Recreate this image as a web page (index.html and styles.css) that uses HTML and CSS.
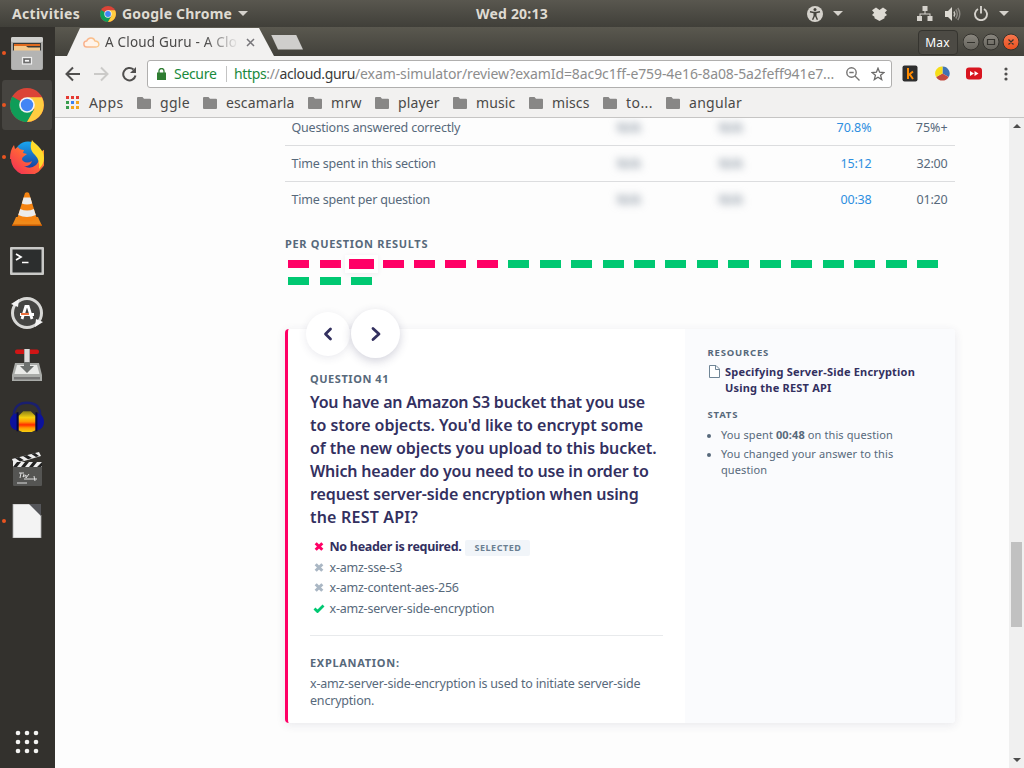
FILE: index.html
```html
<!DOCTYPE html>
<html lang="en">
<head>
<meta charset="utf-8">
<title>A Cloud Guru - A Cloud Guru</title>
<link rel="stylesheet" href="styles.css">
</head>
<body>
<div class="desktop">
  <header class="topbar">
    <span class="tb-activities">Activities</span>
    <svg class="tb-chrome" viewBox="0 0 34 34"><use href="#chrome"/></svg>
    <span class="tb-app">Google Chrome</span>
    <i class="caret"></i>
    <span class="tb-clock">Wed 20:13</span>
    <div class="tb-status">
      <svg width="16" height="16" viewBox="0 0 16 16"><circle cx="8" cy="8" r="8" fill="#d5d2cc"/><circle cx="8" cy="3.400" r="1.500" fill="#45433d"/><path d="M3 5.800 6.600 6.500h2.800L13 5.800M7.200 7v3L5.600 13.800M8.800 7v3l1.600 3.800M8 6.500V10.500" fill="none" stroke="#45433d" stroke-width="1.400"/></svg>
      <i class="caret c1"></i>
      <svg class="s-drop" width="15" height="14" viewBox="0 0 15 14"><path d="M4 .5 7.500 3 11 .5l4 2.800-2.200 2.400L15 8l-2.500 1.800v1.400L7.500 14l-5-2.800V9.800L0 8l2.200-2.300L0 3.300z" fill="#dedbd4"/></svg>
      <svg class="s-net" width="16" height="15" viewBox="0 0 16 15"><path d="M5.500 0h5v5h-5zM0 10h5v5H0zM10.500 10h5v5h-5zM7.500 5h1v2.500h5V10h-1V8.500h-9V10h-1V7.500h5z" fill="#d5d2cc"/></svg>
      <svg class="s-vol" width="16" height="14" viewBox="0 0 16 14"><path d="M0 4h3l4-4v14l-4-4H0z" fill="#dedbd4"/><path d="M9 4.500q1.500 2.500 0 5" stroke="#c8c5bf" stroke-width="1.500" fill="none"/><path d="M10.800 2.500q3 4.500 0 9M12.800 1q4 6 0 12" stroke="#8d8a84" stroke-width="1.400" fill="none"/></svg>
      <svg class="s-pow" width="14" height="15" viewBox="0 0 14 15"><path d="M4 3A6 6 0 1 0 10 3M7 0v7.500" stroke="#d5d2cc" stroke-width="1.900" fill="none"/></svg>
      <i class="caret c2"></i>
    </div>
  </header>
  <div class="workspace">
    <nav class="dock">
      <div class="app running"><svg viewBox="0 0 34 34"><rect x="1" y="1" width="32" height="33" rx="2" fill="#a9a9a7"/><rect x="1" y="1" width="32" height="5" rx="1.500" fill="#cfcfcd"/><rect x="3" y="7" width="28" height="9" fill="#3a3a38"/><rect x="4" y="8" width="26" height="2" fill="#e06a1f"/><path d="M4 10h12l2 1.500h12V16H4z" fill="#f4c88c"/><rect x="2" y="14.500" width="30" height="19" rx="1" fill="#b4b4b3"/><rect x="12.500" y="21.500" width="9" height="6.500" fill="#777" stroke="#eee" stroke-width="1.200"/><rect x="14.500" y="23.500" width="5" height="2.500" fill="#f5f5f5" stroke="#555" stroke-width=".6"/></svg></div>
      <div class="app running active"><svg viewBox="0 0 34 34"><g id="chrome"><circle cx="17" cy="17" r="17" fill="#db4437"/><path d="M17 17 2.300 8.500A17 17 0 0 0 17 34l7-12z" fill="#0f9d58"/><path d="M17 9.200h15A17 17 0 0 1 17 34l7.400-13z" fill="#ffcd40"/><circle cx="17" cy="17" r="7.800" fill="#f4f4f4"/><circle cx="17" cy="17" r="6.200" fill="#4285f4"/></g></svg></div>
      <div class="app running"><svg viewBox="0 0 34 34"><defs><linearGradient id="ff" x1="1" y1="0" x2="0" y2="1"><stop offset="0" stop-color="#ffb026"/><stop offset=".5" stop-color="#ff6139"/><stop offset="1" stop-color="#f0255c"/></linearGradient><linearGradient id="fb" x2="0" y2="1"><stop offset="0" stop-color="#19a6f0"/><stop offset="1" stop-color="#1a3f9c"/></linearGradient></defs><circle cx="18" cy="15" r="13.500" fill="url(#fb)"/><path d="M0 19C0 13 1 9 4 5l1 4 3-2c1 2 3 3 6 3l-1 3 4 1-4 3q-2 2 0 4 4 3 9 0-2 6-8 5 6 4 12-1 5-5 3-12l6-4q4 12-3 19a17 17 0 0 1-31-9z" fill="url(#ff)"/><path d="M22 0c2 4 12 8 12 18q0 6-5 11 1-9-4-14c-5-5-5-9-3-15z" fill="#ffdb2b"/></svg></div>
      <div class="app"><svg viewBox="0 0 34 34"><path d="M6 25h22l4 9H2z" fill="#f08a1a"/><path d="M2 32.500h30V34H2z" fill="#c45a05"/><path d="M15 1q2-1.500 4 0l8 26q-10 5-20 0z" fill="#f58412"/><path d="m13.600 5.500 6.800 0 1.800 6q-5.200 2-10.400 0zM10.200 17q7 3 13.600 0l2 6q-9 4-17.600 0z" fill="#ececec"/></svg></div>
      <div class="app"><svg viewBox="0 0 34 34"><rect x="0" y="3" width="34" height="28" rx="1" fill="#c9c9c7"/><rect x="2.500" y="5.500" width="29" height="23" fill="#2c2e2e"/><path d="m6 10 5 3-5 3" stroke="#fff" stroke-width="1.700" fill="none"/><path d="M12 18.500h6.500" stroke="#fff" stroke-width="1.500"/></svg></div>
      <div class="app"><svg viewBox="0 0 34 34"><circle cx="17" cy="17" r="14.500" fill="#454543" stroke="#d8d8d6" stroke-width="3"/><path d="m1 8 8-5-1 8zM33 26l-8 5 1-8z" fill="#f3f3f3"/><path d="M12 23 15.800 10.500h2.400L22 23M10 18.500h14" stroke="#fff" stroke-width="2.800" fill="none"/><path d="M11 18h8" stroke="#e9632b" stroke-width="1.800"/></svg></div>
      <div class="app"><svg viewBox="0 0 34 34"><path d="M5 15h24l3 12v6H2v-6z" fill="#a9aba8"/><path d="M7 17h20l2.500 9h-25z" fill="#e9eae8"/><path d="M4 29h26v2.500H4z" fill="#777"/><rect x="5" y="1.500" width="24" height="4.500" rx="2" fill="#d01515"/><path d="M14 1h6v17h4l-7 7-7-7h4z" fill="#6d716f"/><path d="M14.500 1h5v13h-5z" fill="#dcdcdc"/></svg></div>
      <div class="app"><svg viewBox="0 0 36 34"><defs><linearGradient id="au" x2="0" y2="1"><stop offset="0" stop-color="#8f8418"/><stop offset=".3" stop-color="#f5d010"/><stop offset=".5" stop-color="#ff9a00"/><stop offset=".65" stop-color="#ff2a00"/><stop offset=".8" stop-color="#ff9a00"/><stop offset="1" stop-color="#f5d010"/></linearGradient></defs><path d="M9 16 14 11h8l5 5v15l-4 2H13l-4-2z" fill="url(#au)"/><path d="M4 16C4 6 10 2 18 2s14 4 14 14" stroke="#1a1f6e" stroke-width="2.600" fill="none"/><path d="M8 13v18c-5 0-8-4-8-9s3-9 8-9zM28 13v18c5 0 8-4 8-9s-3-9-8-9z" fill="#0c129c"/><path d="M8 12v20M28 12v20" stroke="#05073b" stroke-width="2"/></svg></div>
      <div class="app"><svg viewBox="0 0 34 34"><rect x="3" y="14" width="29" height="20" rx="1" fill="#555553"/><path d="m2 7 27-7 2 4L4 12z" fill="#eee"/><path d="m5 6 5 3.500 4-1.200L9 5zM13 4l5 3.300 4-1.200-5-3.200zM21 1.800l5 3.300 3-1-4-3.200z" fill="#222"/><path d="M3 10h29v5H3z" fill="#eee"/><path d="m7 10 4 0-4 5H3zM15 10h4l-4 5h-4zM23 10h4l-4 5h-4zM32 10v4l-1 1h-4z" fill="#222"/><path d="M9 21h5m-3 0-1 5m4-4-1 3 3-2v3l3-4M14 27h13m-3-3 1 5M7 31h10" stroke="#ddd" stroke-width="1" fill="none"/></svg></div>
      <div class="app running"><svg viewBox="0 0 34 34"><path d="M3 0h17l11 11v23H3z" fill="#f3f3f3" stroke="#aaa" stroke-width=".8"/><path d="M19 0h12v12z" fill="#55565a"/></svg></div>
      <svg class="show-apps" width="24" height="24" viewBox="0 0 24 24" fill="#f4f4f2"><circle cx="3" cy="3" r="2.300"/><circle cx="12" cy="3" r="2.300"/><circle cx="21" cy="3" r="2.300"/><circle cx="3" cy="12" r="2.300"/><circle cx="12" cy="12" r="2.300"/><circle cx="21" cy="12" r="2.300"/><circle cx="3" cy="21" r="2.300"/><circle cx="12" cy="21" r="2.300"/><circle cx="21" cy="21" r="2.300"/></svg>
    </nav>
    <div class="browser">
      <div class="tabstrip">
        <div class="tab">
          <svg width="17" height="11" viewBox="0 0 17 11"><defs><linearGradient id="cl"><stop offset="0" stop-color="#f9b08c"/><stop offset="1" stop-color="#fbc98a"/></linearGradient></defs><path d="M4 10a3 3 0 0 1-.3-6C5 0.500 10.500-.5 12 4c5 .2 5 6 1 6z" fill="#fff4ea" stroke="url(#cl)" stroke-width="1.400"/></svg>
          <span class="tab-title">A Cloud Guru - A Clo</span>
          <svg class="tab-x" width="9" height="9" viewBox="0 0 9 9"><path d="m1 1 7 7M8 1 1 8" stroke="#77767a" stroke-width="1.500"/></svg>
        </div>
        <div class="newtab"></div>
        <div class="winctl">
          <span class="user">Max</span>
          <svg width="56" height="18" viewBox="0 0 56 18"><defs><linearGradient id="gb" x2="0" y2="1"><stop offset="0" stop-color="#8a877f"/><stop offset="1" stop-color="#65635c"/></linearGradient><linearGradient id="gr" x2="0" y2="1"><stop offset="0" stop-color="#f7784f"/><stop offset="1" stop-color="#e9501f"/></linearGradient></defs><g stroke="#34332e"><circle cx="8" cy="9" r="8" fill="url(#gb)"/><circle cx="28" cy="9" r="8" fill="url(#gb)"/><circle cx="48" cy="9" r="8" fill="url(#gr)"/></g><path d="M4 9.500h8M24.500 6.500h7v5h-7zM45.500 6.500l5 5M50.500 6.500l-5 5" stroke="#33322d" stroke-width="1.200" fill="none"/></svg>
        </div>
      </div>
      <div class="toolbar">
        <svg class="nav-icons" width="74" height="16" viewBox="0 0 74 16" fill="none" stroke-width="2"><path d="M16 8H3M9 1.500 2.500 8 9 14.500" stroke="#504f4e"/><path d="M30 8h13M37 1.500 43.500 8 37 14.500" stroke="#cbcac8"/><path d="M69.500 3.500A6.200 6.200 0 1 0 71.500 9.500" stroke="#504f4e"/><path d="M72 1v6h-6z" fill="#504f4e"/></svg>
        <div class="omnibox">
          <svg width="9" height="12" viewBox="0 0 9 12"><path d="M0 4.500h9V12H0z" fill="#2f7d32"/><path d="M2 5V3a2.500 2.500 0 0 1 5 0v2" fill="none" stroke="#2f7d32" stroke-width="1.300"/></svg>
          <span class="secure">Secure</span>
          <i class="sep"></i>
          <span class="url"><span class="u1"><b>https</b><i>://</i>acloud.guru</span><span class="u2">/exam-simulator/review?examId=8ac9c1ff-e759-4e16-8a08-5a2feff941e7...</span></span>
          <svg class="zoomic" width="14" height="14" viewBox="0 0 14 14" fill="none" stroke="#757473" stroke-width="1.400"><circle cx="5.500" cy="5.500" r="4.700"/><path d="m9 9 4.500 4.500M3.300 5.500h4.400"/></svg>
          <svg class="star" width="14" height="14" viewBox="0 0 14 14"><path d="m7 1.200 1.600 4 4.400.3-3.400 2.800 1.100 4.300L7 10.200l-3.700 2.400 1.100-4.300L1 5.500l4.400-.3z" fill="none" stroke="#6b6a69" stroke-width="1.300"/></svg>
        </div>
        <svg class="ext" width="82" height="17" viewBox="0 0 82 17"><rect x=".5" y=".5" width="15" height="16" rx="2" fill="#2e2e2e"/><path d="M6 3v11M6 10.500l5-4M7.500 9l3.500 5" stroke="#ff8a00" stroke-width="2" fill="none"/><path d="M40.500 8.500V1.500a7 7 0 0 1 6.200 10.500z" fill="#3f73b4"/><path d="M40.500 8.500 46.700 12a7.300 7.300 0 0 1-12.600 0z" fill="#c34a3f"/><path d="M40.500 8.500 34.100 12a7 7 0 0 1 6.400-10.500z" fill="#f6de17"/><rect x="64" y="2.500" width="16" height="12" rx="3" fill="#d8151f"/><path d="m68 6 4 2.500-4 2.500zm4.500 0 4 2.500-4 2.500z" fill="#fff"/></svg>
        <svg class="menu" width="4" height="14" viewBox="0 0 4 14" fill="#504f4e"><circle cx="2" cy="2" r="1.600"/><circle cx="2" cy="7" r="1.600"/><circle cx="2" cy="12" r="1.600"/></svg>
      </div>
      <svg class="defs" width="0" height="0"><symbol id="folder" viewBox="0 0 14 12"><path d="M1 0h4.500L7 1.800h6a1 1 0 0 1 1 1V11a1 1 0 0 1-1 1H1a1 1 0 0 1-1-1V1a1 1 0 0 1 1-1z" fill="#888786"/></symbol></svg>
      <div class="bookmarks">
        <span class="bm w-apps"><svg width="13" height="13" viewBox="0 0 13 13"><path d="M0 0h3v3H0zM5 0h3v3H5zM10 0h3v3h-3z" fill="#e53a33"/><path d="M0 5h3v3H0zM0 10h3v3H0z" fill="#3a9c4e"/><path d="M5 5h3v3H5z" fill="#3b82f0"/><path d="M10 5h3v3h-3zM5 10h3v3H5zM10 10h3v3h-3z" fill="#f2a51e"/></svg><span>Apps</span></span>
        <span class="bm w-ggle"><svg><use href="#folder"/></svg><span>ggle</span></span>
        <span class="bm w-esc"><svg><use href="#folder"/></svg><span>escamarla</span></span>
        <span class="bm w-mrw"><svg><use href="#folder"/></svg><span>mrw</span></span>
        <span class="bm w-player"><svg><use href="#folder"/></svg><span>player</span></span>
        <span class="bm w-music"><svg><use href="#folder"/></svg><span>music</span></span>
        <span class="bm w-miscs"><svg><use href="#folder"/></svg><span>miscs</span></span>
        <span class="bm w-to"><svg><use href="#folder"/></svg><span>to...</span></span>
        <span class="bm w-angular"><svg><use href="#folder"/></svg><span>angular</span></span>
      </div>
      <div class="viewport">
        <main class="page">
          <div class="stats">
            <div class="row"><span>Questions answered correctly</span><em>N/A</em><em>N/A</em><b class="pct">70.8%</b><span class="goal pct">75%+</span></div>
            <div class="row"><span>Time spent in this section</span><em>N/A</em><em>N/A</em><b>15:12</b><span class="goal">32:00</span></div>
            <div class="row"><span>Time spent per question</span><em>N/A</em><em>N/A</em><b>00:38</b><span class="goal">01:20</span></div>
          </div>
          <h2 class="caps per">PER QUESTION RESULTS</h2>
          <div class="bars">
            <i class="bad"></i><i class="bad"></i><i class="bad sel"></i><i class="bad"></i><i class="bad"></i><i class="bad"></i><i class="bad"></i><i></i><i></i><i></i><i></i><i></i><i></i><i></i><i></i><i></i><i></i><i></i><i></i><i></i><i></i><i></i><i></i><i></i>
          </div>
          <section class="card">
            <div class="pager prev"><svg width="10" height="14" viewBox="0 0 10 14"><path d="M7.500 2 2.500 7 7.500 12" /></svg></div>
            <div class="pager next"><svg width="12" height="16" viewBox="0 0 12 16"><path d="m3 2.500 6 5.500-6 5.500" /></svg></div>
            <div class="question">
              <div class="caps number">QUESTION 41</div>
              <h1><span class="l1">You have an Amazon S3 bucket that you use</span><br><span class="l2">to store objects. You'd like to encrypt some</span><br><span class="l3">of the new objects you upload to this bucket.</span><br><span class="l4">Which header do you need to use in order to</span><br><span class="l5">request server-side encryption when using</span><br><span class="l6">the REST API?</span></h1>
              <ul class="answers">
                <li class="chosen"><svg><use href="#x"/></svg><span>No header is required.</span><span class="tag">SELECTED</span></li>
                <li><svg><use href="#x"/></svg><span>x-amz-sse-s3</span></li>
                <li><svg><use href="#x"/></svg><span>x-amz-content-aes-256</span></li>
                <li class="right"><svg><use href="#check"/></svg><span>x-amz-server-side-encryption</span></li>
              </ul>
              <div class="caps explain">EXPLANATION:</div>
              <p>x-amz-server-side-encryption is used to initiate server-side<br>encryption.</p>
            </div>
            <aside>
              <h3>RESOURCES</h3>
              <a class="res"><svg width="11" height="13" viewBox="0 0 11 13"><path d="M.5.5h6.500l3.500 3.500v8.500h-10zM6.500.5v4h4" fill="#fff" stroke="#6f8596"/></svg><span>Specifying Server-Side Encryption<br>Using the REST API</span></a>
              <h3 class="st">STATS</h3>
              <ul><li>You spent <b>00:48</b> on this question</li><li>You changed your answer to this<br>question</li></ul>
            </aside>
          </section>
        </main>
        <div class="scroll"><i class="up"></i><i class="thumb"></i><i class="down"></i></div>
      </div>
    </div>
  </div>
</div>
<svg class="defs" width="0" height="0">
<symbol id="x" viewBox="0 0 9 9"><path d="m1.200 1.200 6.600 6.600M7.800 1.200 1.200 7.800" stroke="currentColor" stroke-width="3"/></symbol>
<symbol id="check" viewBox="0 0 11 9"><path d="m1 4.500 3 3L10 1.500" stroke="currentColor" stroke-width="2.800" fill="none"/></symbol>
</svg>
</body>
</html>
```
FILE: styles.css
```css
* { box-sizing: border-box; }
body { margin: 0; font-family: "Noto Sans", sans-serif; font-size: 12.5px; white-space: nowrap; color: #57697b; }
h1, h2, h3, p, ul { margin: 0; padding: 0; list-style: none; }
i, em { font-style: normal; }
svg { display: block; flex: none; }
.defs { position: absolute; }
.desktop { width: 1024px; height: 768px; display: flex; flex-direction: column; overflow: hidden; }

.topbar { height: 27px; flex: none; display: flex; align-items: center; padding: 0 16px 0 12px; background: linear-gradient(#59574f, #403f39); color: #dfdbd2; font-size: 14px; font-weight: 700; letter-spacing: .2px; }
.tb-activities { width: 68px; letter-spacing: .3px; }
.tb-chrome { width: 16px; height: 16px; margin-left: 20px; }
.tb-app { width: 110px; margin-left: 6px; }
.caret { border: 5px solid transparent; border-top-color: #d5d2cc; border-bottom: 0; margin-left: 6px; }
.tb-clock { margin-left: 228px; width: 72px; }
.tb-status { display: flex; align-items: center; margin-left: auto; }
.c1 { margin-left: 10px; }
.s-drop { margin-left: 28.5px; }
.s-net { margin-left: 30.5px; }
.s-vol { margin-left: 12px; }
.s-pow { margin-left: 13px; }
.c2 { margin-left: 11px; margin-right: -1px; }

.workspace { flex: 1; display: flex; min-height: 0; }
.dock { width: 55px; background: #33312d; display: flex; flex-direction: column; }
.app { height: 52px; display: flex; align-items: center; justify-content: center; position: relative; border: 1px solid transparent; border-width: 1px 3px 1px 2px; background-clip: padding-box; border-radius: 5px; }
.app svg { width: 34px; height: 34px; }
.app.active { background-color: #464440; }
.app.running::before { content: ""; position: absolute; left: 0; top: 23px; width: 4px; height: 4px; border-radius: 2px; background: #e95420; }
.show-apps { margin: auto 0 14px 15px; }

.browser { flex: 1; display: flex; flex-direction: column; background: #f2f1f0; min-width: 0; }
.tabstrip { height: 29px; display: flex; padding: 1px 5px 0 12px; background: linear-gradient(#5a584f, #42413b); align-items: center; }
.tab { width: 207px; height: 28px; background: #f2f1f0; clip-path: polygon(13px 0, 192px 0, 207px 28px, 0 28px); display: flex; align-items: center; padding-left: 16px; }
.tab-title { width: 132px; margin-left: 5px; overflow: hidden; font-size: 13.5px; letter-spacing: .19px; color: #4b4a49; -webkit-mask-image: linear-gradient(90deg, #000 100px, transparent 134px); }
.tab-x { margin-left: 8.5px; }
.newtab { width: 32px; height: 15px; margin-left: -3px; background: #cfcecc; clip-path: polygon(0 0, 25px 0, 32px 15px, 7px 15px); }
.winctl { display: flex; align-items: center; margin-left: auto; }
.user { width: 40px; height: 25px; border: 1px solid #35342f; border-radius: 4px; background: #4c4a44; color: #fff; font-size: 12px; letter-spacing: .18px; display: flex; align-items: center; justify-content: center; margin-right: 5.5px; }

.toolbar { height: 35px; display: flex; align-items: center; padding-left: 9px; }
.omnibox { width: 745px; height: 28px; margin-left: 9px; border: 1px solid #b0afae; border-radius: 3px; background: #fff; display: flex; align-items: center; padding-left: 9px; font-size: 14px; }
.secure { color: #1a8a3c; width: 43px; margin-left: 8px; letter-spacing: -.31px; }
.sep { width: 1px; height: 16px; background: #c4c4c4; margin: 0 7px 0 9px; }
.url { display: flex; width: 600px; color: #3a3a3a; }
.url b { color: #1a8a3c; font-weight: 400; }
.url i, .u2 { color: #8d8d8d; }
.u1 { width: 121px; letter-spacing: -.35px; }
.u2 { letter-spacing: -.1px; }
.zoomic { margin-left: 12px; }
.star { margin-left: 11px; }
.ext { margin-left: 10px; }
.menu { margin-left: 20px; }

.bookmarks { height: 27px; display: flex; align-items: center; padding: 0 0 3px 11px; border-bottom: 1px solid #c6c5c4; font-size: 14px; color: #4a4948; letter-spacing: .13px; }
.bm { display: flex; align-items: center; gap: 9px; }
.bm svg { width: 14px; height: 12px; }
.w-apps { width: 71px; gap: 10px; letter-spacing: .41px; }
.w-apps svg { width: 13px; height: 13px; }
.w-ggle { width: 66px; letter-spacing: .32px; }
.w-esc { width: 105px; }
.w-mrw { width: 67px; letter-spacing: .37px; }
.w-player { width: 78px; }
.w-music { width: 76px; }
.w-miscs { width: 74px; }
.w-to { width: 63px; letter-spacing: .44px; }
.w-angular { letter-spacing: .28px; }

.viewport { flex: 1; display: flex; min-height: 0; overflow: hidden; background: #fdfdfd; }
.page { width: 954px; padding-left: 230px; }
.stats, .bars, .card { width: 670px; }
.stats { margin-top: -8px; }
.row { height: 36px; display: grid; grid-template-columns: 292.5px 102px 102px 83.5px 76px; align-items: center; padding-left: 6.5px; border-bottom: 1px solid #dcdddf; letter-spacing: -.19px; }
.row:last-child { border-color: transparent; }
.row em { padding-left: 33px; filter: blur(4px); font-weight: 700; color: #8793a0; }
.row b { font-weight: 400; color: #2e8fe0; text-align: right; }
.row .goal { text-align: right; }
.row .pct { letter-spacing: -.05px; }
.caps { font-size: 11px; font-weight: 700; color: #57697b; line-height: 16px; letter-spacing: .68px; }
.per { margin-top: 18px; }
.bars { display: grid; grid-template-columns: repeat(21, 21px); gap: 9px 10.45px; padding: 8px 0 0 3.2px; }
.bars i { height: 8px; background: #00c872; }
.bars .bad { background: #ff0066; }
.bars .sel { margin: -1px -2px; height: 10px; box-shadow: 0 0 0 4px #fff, 0 1px 5px 4px #eeeef2; }
.card { position: relative; height: 394px; margin-top: 44px; display: flex; border-left: 3px solid #ff0066; border-radius: 4px; background: #fff; box-shadow: 0 2px 10px rgba(50, 50, 93, .1); }
.pager { position: absolute; border-radius: 50%; background: #fff; display: flex; align-items: center; justify-content: center; }
.pager path { fill: none; stroke: #33305f; stroke-width: 2.8; stroke-linecap: round; stroke-linejoin: round; }
.prev { left: 17.5px; top: -17.5px; width: 44px; height: 44px; box-shadow: 0 2px 8px rgba(50, 50, 93, .1); }
.next { left: 63px; top: -20px; width: 49px; height: 49px; box-shadow: 0 3px 10px rgba(50, 50, 93, .22); }
.question { width: 397px; padding: 42px 22px 0; }
.number { letter-spacing: .55px; }
h1 { font-size: 16px; line-height: 23px; font-weight: 600; color: #33305f; margin-top: 4px; }
.l1 { letter-spacing: -.2px; }
.l2 { letter-spacing: -.04px; }
.l3 { letter-spacing: -.08px; }
.l4 { letter-spacing: -.18px; }
.l5 { letter-spacing: -.11px; }
.l6 { letter-spacing: .2px; }
.answers { margin-top: 7px; height: 100px; border-bottom: 1px solid #e8eaec; letter-spacing: -.22px; }
.answers li { height: 20.5px; display: flex; align-items: center; padding-left: 4px; }
.answers svg { width: 10px; height: 9px; margin-right: 5.5px; color: #aab7c4; }
.answers .chosen { height: 21px; color: #33305f; font-weight: 700; letter-spacing: -.3px; }
.answers .chosen svg { color: #ff0066; }
.answers .right svg { width: 12px; margin: 0 4.5px 0 -1px; color: #00c872; }
.tag { width: 65px; height: 16px; margin: 2px 0 0 4px; border-radius: 2px; background: #f1f5f9; color: #6b7f92; font-size: 9px; letter-spacing: .54px; display: flex; align-items: center; justify-content: center; }
.explain { margin-top: 19px; letter-spacing: .7px; }
p { line-height: 17px; margin-top: 4px; letter-spacing: -.2px; }
aside { flex: 1; background: #fafbfd; padding: 16px 0 0 22.5px; font-size: 11px; line-height: 16px; border-radius: 0 4px 4px 0; letter-spacing: .11px; }
h3 { font-size: 9.5px; line-height: 16px; letter-spacing: .8px; }
.res { display: flex; margin-top: 3px; color: #33305f; font-weight: 700; letter-spacing: .21px; }
.res svg { margin: 1px 5px 0 1.5px; }
.st { margin-top: 11px; }
aside ul { padding-left: 13.5px; margin-top: 4px; }
aside li { margin-bottom: 3px; position: relative; }
aside li::before { content: ""; position: absolute; left: -14px; top: 7px; width: 4px; height: 4px; border-radius: 2px; background: #57697b; }

.scroll { width: 15px; background: #f0f0f0; display: flex; flex-direction: column; align-items: center; }
.up { border: 4px solid transparent; border-top: 0; border-bottom-color: #4d4d4d; margin-top: 6px; }
.thumb { width: 11px; height: 85px; background: #c1c1c1; margin-top: 414px; }
.down { border: 4px solid transparent; border-bottom: 0; border-top-color: #4d4d4d; margin: auto 0 6px; }
```
